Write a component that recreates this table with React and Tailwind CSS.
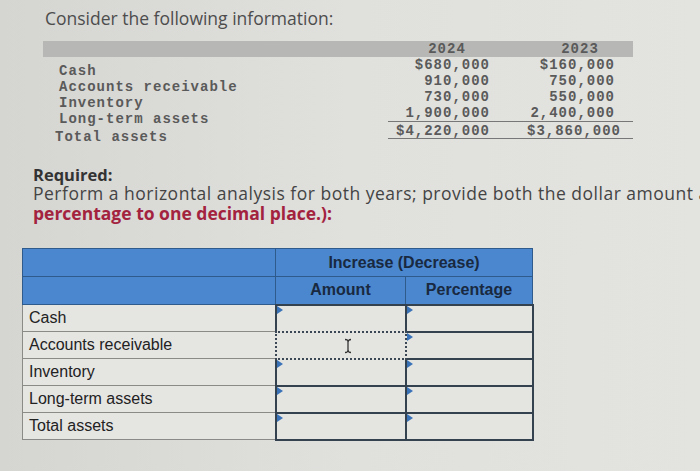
const info = [
  { a: '$680,000', b: '$160,000' },
  { a: '910,000', b: '750,000' },
  { a: '730,000', b: '550,000' },
  { a: '1,900,000', b: '2,400,000' },
];

const labels = ['Cash', 'Accounts receivable', 'Inventory', 'Long-term assets'];

const rows = ['Cash', 'Accounts receivable', 'Inventory', 'Long-term assets', 'Total assets'];

function Marker() {
  return (
    <span className="absolute left-0 top-0 w-0 h-0 border-t-[4px] border-b-[4px] border-l-[6px] border-t-transparent border-b-transparent border-l-[#3a72b8]" />
  );
}

function IBeam() {
  return (
    <svg className="absolute left-[66px] top-[5px]" width="10" height="16" viewBox="0 0 10 16" fill="none" stroke="#333" strokeWidth="1.3">
      <path d="M2 1.5 Q5 1.5 5 4 Q5 1.5 8 1.5" />
      <path d="M5 4 V12" />
      <path d="M2 14.5 Q5 14.5 5 12 Q5 14.5 8 14.5" />
    </svg>
  );
}

function InputCell({ focused }) {
  return (
    <td className="relative h-[27px] p-0 border-[2px] border-[#34414f] bg-[#e4e4e1]">
      {focused ? (
        <div className="absolute -inset-[2px] border-[2px] border-dotted border-[#3c4756] bg-[#e4e4e1]">
          <IBeam />
        </div>
      ) : (
        <Marker />
      )}
    </td>
  );
}

export default function App() {
  return (
    <div className="w-[700px] h-[471px] overflow-hidden bg-gradient-to-r from-[#d5d5d2] via-[#e0e0dd] to-[#e3e3e0] font-['Open_Sans','Liberation_Sans',sans-serif]">
      <p className="pl-[45px] pt-[7px] text-[17.5px] leading-[22px] text-[#4d4d4d]">
        Consider the following information:
      </p>

      {/* given data */}
      <div className="ml-[43px] mt-[12px] w-[590px] font-['Liberation_Mono',monospace] text-[14px] tracking-[1px] text-[#5a5a5a] font-bold leading-[16px]">
        <div className="grid grid-cols-[345px_102px_37px_106px] bg-[#b7b7b5] h-[16px]">
          <span />
          <span className="text-center pl-[16px]">2024</span>
          <span />
          <span className="text-center">2023</span>
        </div>
        <div className="flex items-start">
          <div className="w-[345px] pt-[6px] flex flex-col">
            {labels.map((l) => (
              <span key={l} className="pl-[16px] h-[16px]">{l}</span>
            ))}
            <span className="pl-[12px] h-[16px] mt-[2px]">Total assets</span>
          </div>
          <div className="flex flex-col">
            {info.map((r) => (
              <div key={r.a} className="grid grid-cols-[102px_37px_106px] h-[16px]">
                <span className="text-right">{r.a}</span>
                <span />
                <span className="text-right pr-[18px]">{r.b}</span>
              </div>
            ))}
            <div className="grid grid-cols-[102px_37px_106px] border-y border-[#777] h-[18px] pt-[1px]">
              <span className="text-right">$4,220,000</span>
              <span />
              <span className="text-right pr-[18px]">$3,860,000</span>
            </div>
          </div>
        </div>
      </div>

      <div className="pl-[33px] mt-[20px] whitespace-nowrap">
        <p className="text-[16.5px] leading-[19px] font-bold text-[#333]">Required:</p>
        <p className="text-[17.5px] leading-[19px] tracking-[0.5px] text-[#444]">
          Perform a horizontal analysis for both years; provide both the dollar amount and
        </p>
        <p className="text-[17.5px] leading-[20px] font-bold text-[#a3233f]">
          percentage to one decimal place.):
        </p>
      </div>

      {/* answer table */}
      <table className="ml-[22px] mt-[25px] border-collapse font-['Liberation_Sans',Arial,sans-serif]">
        <colgroup>
          <col className="w-[253px]" />
          <col className="w-[130px]" />
          <col className="w-[127px]" />
        </colgroup>
        <thead>
          <tr className="h-[28px] bg-[#4a87cf]">
            <th className="border border-[#2f5b8c]" />
            <th colSpan={2} className="border border-[#2f5b8c] text-[16px] font-bold text-[#19293f]">
              Increase (Decrease)
            </th>
          </tr>
          <tr className="h-[28px] bg-[#4a87cf]">
            <th className="border border-[#2f5b8c]" />
            <th className="border border-[#2f5b8c] text-[16px] font-bold text-[#19293f]">Amount</th>
            <th className="border border-[#2f5b8c] text-[16px] font-bold text-[#19293f]">Percentage</th>
          </tr>
        </thead>
        <tbody>
          {rows.map((r, i) => (
            <tr key={r}>
              <td className="h-[27px] border border-[#8a8a88] bg-[#e5e5e2] pl-[6px] text-[16px] text-[#222] leading-none">
                {r}
              </td>
              <InputCell focused={i === 1} />
              <InputCell />
            </tr>
          ))}
        </tbody>
      </table>
    </div>
  );
}
